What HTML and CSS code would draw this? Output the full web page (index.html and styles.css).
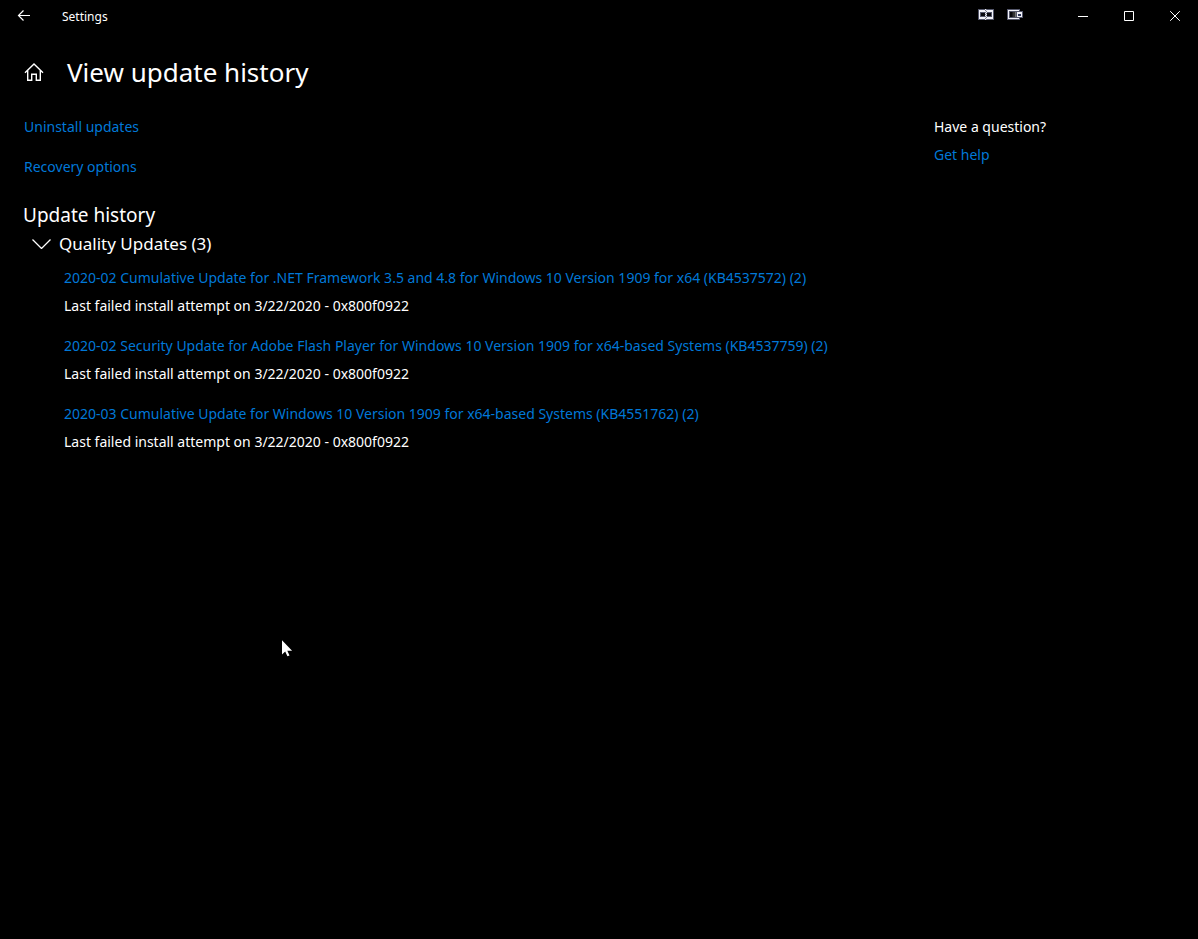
FILE: index.html
```html
<!DOCTYPE html>
<html lang="en">
<head>
<meta charset="utf-8">
<title>Settings</title>
<meta name="viewport" content="width=device-width, initial-scale=1">
<link rel="stylesheet" href="styles.css">
</head>
<body>
<header class="titlebar">
  <button class="back" type="button" aria-label="Back">
    <svg width="14" height="12" viewBox="0 0 14 12" fill="none" stroke="currentColor" stroke-width="1.2"><path d="M13 5.500H1.500M6.500.5l-5 5 5 5"/></svg>
  </button>
  <span class="app-name">Settings</span>
  <div class="tools">
    <button class="tool" type="button" aria-label="Span displays">
      <svg width="16" height="11" viewBox="0 0 16 11" shape-rendering="crispEdges"><path fill="#55586c" d="M0 0h16v11H0z"/><path fill="#f2f2f8" d="M1 1h14v2H1zM1 8h14v2H1zM1 1h1v9H1zM14 1h1v9h-1z"/><path fill="#08080c" d="M3 4h4v3H3zM9 4h4v3H9z"/><path fill="#77798a" d="M7 0h2v11H7z"/><path fill="#e8e8ec" d="M7 0h1v1H7zM8 1h1v1H8zM7 2h1v1H7zM8 3h1v1H8zM7 4h1v1H7zM8 5h1v1H8zM7 6h1v1H7zM8 7h1v1H8zM7 8h1v1H7zM8 9h1v1H8zM7 10h1v1H7z"/></svg>
    </button>
    <button class="tool" type="button" aria-label="Move to next display">
      <svg width="16" height="11" viewBox="0 0 16 11" shape-rendering="crispEdges"><path fill="#55586c" d="M0 0h13v11H0z"/><path fill="#f2f2f8" d="M1 1h11v1H1zM1 9h11v1H1zM1 1h1v9H1z"/><path fill="#08080c" d="M3 3h2v5H3z"/><path fill="#1c1c20" d="M5 3h1v5H5z"/><path fill="#333" d="M6 3h2v5H6z"/><path fill="#777" d="M8 3h1v5H8z"/><path fill="#55586c" d="M9 2h7v7H9z"/><path fill="#f2f2f8" d="M10 3h5v5h-5z"/><path fill="#30385c" d="M11 5h3v2h-3z"/></svg>
    </button>
  </div>
  <div class="window-controls">
    <button class="caption" type="button" aria-label="Minimize">
      <svg width="10" height="10" viewBox="0 0 10 10"><path fill="currentColor" d="M0 5h10v1H0z"/></svg>
    </button>
    <button class="caption" type="button" aria-label="Maximize">
      <svg width="10" height="10" viewBox="0 0 10 10" fill="none" stroke="currentColor"><path d="M.5.5h9v9h-9z"/></svg>
    </button>
    <button class="caption" type="button" aria-label="Close">
      <svg width="10" height="10" viewBox="0 0 10 10" fill="none" stroke="currentColor"><path d="M.2.2l9.6 9.6M9.8.2L.2 9.8"/></svg>
    </button>
  </div>
</header>
<div class="page-head">
  <button class="home" type="button" aria-label="Home">
    <svg width="20" height="18" viewBox="0 0 20 18" fill="none" stroke="currentColor" stroke-width="1.4"><path d="M1 9.8L10 1l9 8.800M3.700 7.500v9.700h4v-6h4.600v6h4V7.500"/></svg>
  </button>
  <h1 class="page-title">View update history</h1>
</div>
<div class="content">
  <main class="main">
    <nav class="actions">
      <a class="link" href="#uninstall">Uninstall updates</a>
      <a class="link" href="#recovery">Recovery options</a>
    </nav>
    <h2 class="section-title">Update history</h2>
    <button class="group" type="button" aria-expanded="true" aria-controls="quality">
      <svg width="19" height="10" viewBox="0 0 19 10" fill="none" stroke="currentColor" stroke-width="1.3"><path d="M.5.5l9 9 9-9"/></svg>
      <span>Quality Updates (3)</span>
    </button>
    <ul class="updates" id="quality">
      <li class="update">
        <a class="link" href="#kb4537572">2020-02 Cumulative Update for .NET Framework 3.5 and 4.8 for Windows 10 Version 1909 for x64 (KB4537572) (2)</a>
        <p class="status">Last failed install attempt on 3/22/2020 - 0x800f0922</p>
      </li>
      <li class="update">
        <a class="link" href="#kb4537759">2020-02 Security Update for Adobe Flash Player for Windows 10 Version 1909 for x64-based Systems (KB4537759) (2)</a>
        <p class="status">Last failed install attempt on 3/22/2020 - 0x800f0922</p>
      </li>
      <li class="update">
        <a class="link" href="#kb4551762">2020-03 Cumulative Update for Windows 10 Version 1909 for x64-based Systems (KB4551762) (2)</a>
        <p class="status">Last failed install attempt on 3/22/2020 - 0x800f0922</p>
      </li>
    </ul>
  </main>
  <aside class="help">
    <h2 class="help-title">Have a question?</h2>
    <a class="link" href="#help">Get help</a>
  </aside>
</div>
<svg class="pointer" width="11" height="17" viewBox="0 0 12 18" aria-hidden="true"><path fill="#fff" d="M0 0v15.500l3.500-3.300 2.400 5.300 2.300-1-2.400-5.100H11z"/></svg>
</body>
</html>
```
FILE: styles.css
```css
* { box-sizing: border-box; }

body {
  margin: 0;
  min-height: 100vh;
  background: #000;
  color: #fff;
  font: 14px/20px "Segoe UI", "Noto Sans", "Open Sans", sans-serif;
}

h1, h2, p, ul { margin: 0; padding: 0; font-weight: 400; }
ul { list-style: none; }

button {
  padding: 0;
  border: 0;
  background: none;
  color: inherit;
  font: inherit;
}

svg { display: block; flex: none; }

.link { color: #0078d7; text-decoration: none; }
.link:hover { color: #999; }

.titlebar { display: flex; align-items: center; height: 32px; }
.back { display: grid; place-items: center; width: 48px; height: 32px; }
.app-name { margin-left: 14px; padding-top: 2px; font-size: 12px; }
.tools { display: flex; gap: 13px; margin-left: auto; padding-bottom: 3px; }
.window-controls { display: flex; margin-left: 37px; }
.caption { display: grid; place-items: center; width: 46px; height: 32px; }

.page-head {
  display: flex;
  align-items: center;
  gap: 23px;
  padding: 19px 24px 24px;
}
.page-title { font-size: 26px; line-height: 42px; }

.content { display: flex; justify-content: space-between; padding: 0 24px; }
.main { flex: 1; }
.actions { display: flex; flex-direction: column; align-items: flex-start; gap: 20px; }
.section-title { margin: 24px 0 0 -1px; font-size: 19px; line-height: 28px; }
.group {
  display: flex;
  align-items: center;
  gap: 8px;
  margin: 1px 0 0 8px;
  font-size: 17px;
  line-height: 28px;
}

.updates { display: grid; gap: 20px; margin: 10px 0 0 40px; }
.update { display: grid; gap: 8px; justify-items: start; }

.help { display: grid; gap: 8px; align-content: start; width: 240px; }
.help-title { font-size: 14px; }

.pointer { position: absolute; left: 282px; top: 640px; }
```
